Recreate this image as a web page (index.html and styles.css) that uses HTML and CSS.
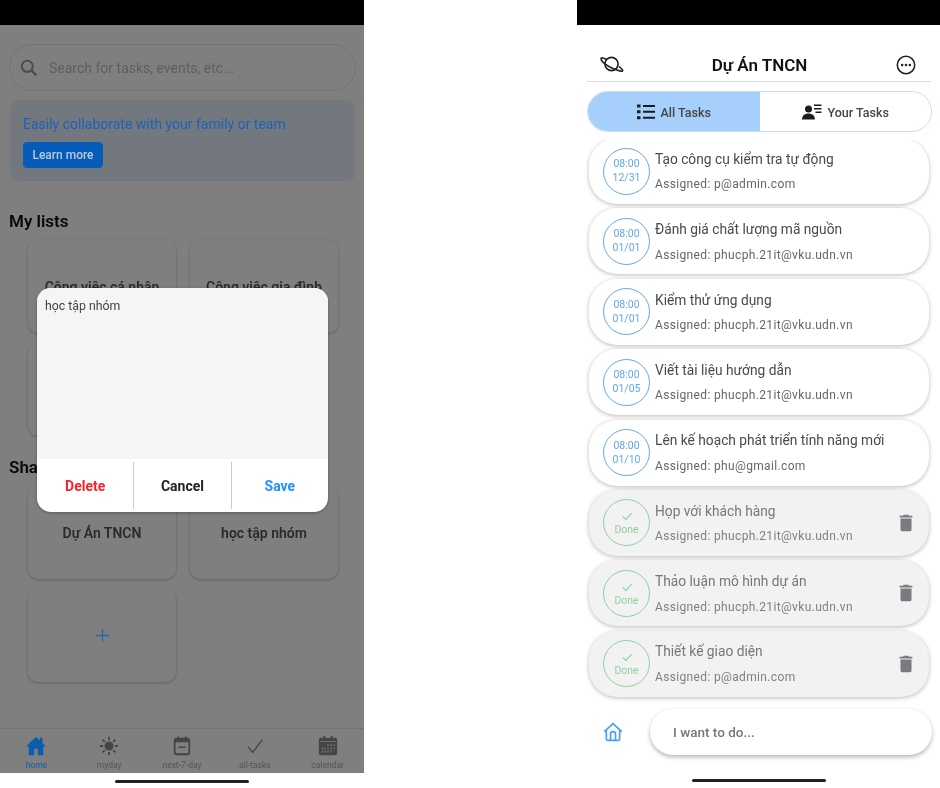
FILE: index.html
```html
<!DOCTYPE html>
<html lang="vi">
<head>
    <meta charset="UTF-8">
    <meta name="viewport" content="width=device-width, initial-scale=1.0">
    <title>Dự Án TNCN</title>
    <link rel="stylesheet" href="styles.css">
</head>
<body>
    <svg class="defs" width="0" height="0">
        <symbol id="i-check" viewBox="0 0 24 24"><path d="M5 13l5 5L20 7" fill="none" stroke="currentColor" stroke-width="2"/></symbol>
        <symbol id="i-trash" viewBox="0 0 24 24"><path fill="currentColor" d="M6 19a2 2 0 0 0 2 2h8a2 2 0 0 0 2-2V7H6v12zM19 4h-3.5l-1-1h-5l-1 1H5v2h14V4z"/></symbol>
    </svg>

    <div class="phone phone-home">
        <div class="status-bar"></div>
        <div class="screen">
            <div class="search">
                <svg class="search-icon" viewBox="0 0 24 24"><circle cx="10.5" cy="10.5" r="7" fill="none" stroke="currentColor" stroke-width="2.6"/><path d="M15.5 15.5L21 21" stroke="currentColor" stroke-width="3" stroke-linecap="round"/></svg>
                <span>Search for tasks, events, etc...</span>
            </div>
            <div class="banner">
                <p>Easily collaborate with your family or team</p>
                <button class="learn-btn">Learn more</button>
            </div>
            <h2 class="section-title my-lists">My lists</h2>
            <div class="list-grid">
                <div class="list-card">Công việc cá nhân</div>
                <div class="list-card">Công việc gia đình</div>
                <div class="list-card"></div>
            </div>
            <h2 class="section-title shared">Shared lists</h2>
            <div class="list-grid">
                <div class="list-card">Dự Án TNCN</div>
                <div class="list-card">học tập nhóm</div>
                <div class="list-card add-card">
                    <svg viewBox="0 0 16 16" width="15" height="15"><path d="M8 1v14M1 8h14" stroke="currentColor" stroke-width="1.4"/></svg>
                </div>
            </div>
        </div>
        <nav class="tabbar">
            <div class="tab active">
                <svg viewBox="0 0 24 24"><path fill="currentColor" d="M12 2L1 12.500h3V22h6v-7h4v7h6v-9.500h3l-4-3.800V3h-3v2.900z"/></svg>
                <span>home</span>
            </div>
            <div class="tab">
                <svg viewBox="0 0 24 24"><circle cx="12" cy="12" r="5" fill="currentColor"/><path d="M12 2v3.500M12 18.500V22M2 12h3.500M18.500 12H22M5 5l2.400 2.400M16.600 16.600L19 19M5 19l2.400-2.400M16.600 7.400L19 5" stroke="currentColor" stroke-width="2"/></svg>
                <span>myday</span>
            </div>
            <div class="tab">
                <svg viewBox="0 0 24 24"><rect x="4" y="4" width="16" height="17" rx="2" fill="none" stroke="currentColor" stroke-width="2"/><path fill="currentColor" d="M4 4h16v4H4zM7 1.500h2V5H7zM15 1.500h2V5h-2zM8 12.500h8v1.800H8z"/></svg>
                <span>next-7-day</span>
            </div>
            <div class="tab">
                <svg viewBox="0 0 24 24"><path d="M4.500 13l5 6L20 5" fill="none" stroke="currentColor" stroke-width="1.500"/></svg>
                <span>all-tasks</span>
            </div>
            <div class="tab">
                <svg viewBox="0 0 24 24"><path fill="currentColor" d="M4 3h3V1h2v2h6V1h2v2h3a2 2 0 0 1 2 2v15a2 2 0 0 1-2 2H4a2 2 0 0 1-2-2V5a2 2 0 0 1 2-2z"/><path fill="#d8d8d8" d="M3 6.500h18v1H3zM11 10h2v2h-2zM14.500 10h2v2h-2zM18 10h1.500v2H18zM5 13.500h2v2H5zM8 13.500h2v2H8zM11 13.500h2v2h-2zM14.500 13.500h2v2h-2zM18 13.500h1.500v2H18zM5 17h2v2H5zM8 17h2v2H8zM11 17h2v2h-2zM14.500 17h2v2h-2z"/></svg>
                <span>calendar</span>
            </div>
        </nav>
        <div class="home-area"><div class="home-indicator"></div></div>

        <div class="backdrop"></div>
        <div class="dialog">
            <div class="dialog-body">học tập nhóm</div>
            <div class="dialog-actions">
                <button class="dlg-btn delete">Delete</button>
                <button class="dlg-btn">Cancel</button>
                <button class="dlg-btn save">Save</button>
            </div>
        </div>
    </div>

    <div class="phone phone-tasks">
        <div class="status-bar"></div>
        <header class="top">
            <svg class="top-icon" viewBox="0 0 24 24"><g fill="none" stroke="currentColor" stroke-width="1.600"><circle cx="11.500" cy="11" r="6.600"/><path d="M6.500 6.500C3.500 5 1 4.300 1 5.500c0 2 3.500 5.500 8 8 4.500 2.500 12 5.500 13.500 4.500 .8-.6-1-2.500-3.500-4.500"/></g></svg>
            <h1>Dự Án TNCN</h1>
            <svg class="top-icon more" viewBox="0 0 24 24"><circle cx="12" cy="12" r="9.500" fill="none" stroke="currentColor" stroke-width="1.700"/><circle cx="7.800" cy="12" r="1.400" fill="currentColor"/><circle cx="12" cy="12" r="1.400" fill="currentColor"/><circle cx="16.200" cy="12" r="1.400" fill="currentColor"/></svg>
        </header>
        <div class="segment">
            <div class="seg-item on">
                <svg viewBox="0 0 18 16" width="18" height="16"><path fill="currentColor" d="M0 0.500h3.500v3H0zM0 6.300h3.500v3H0zM0 12.200h3.500v3H0zM6 1h12v2H6zM6 6.800h12v2H6zM6 12.700h12v2H6z"/></svg>
                <span>All Tasks</span>
            </div>
            <div class="seg-item">
                <svg viewBox="0 0 20 16" width="20" height="16"><circle cx="6.500" cy="5" r="3.500" fill="currentColor"/><path fill="currentColor" d="M0 15.500c0-4 3-6 6.500-6s6.500 2 6.500 6zM12 0.500h7.500v1.500H12zM12 4h7.500v1.500H12zM13.500 7.500h6V9h-6z"/></svg>
                <span>Your Tasks</span>
            </div>
        </div>
        <div class="task-list">
            <div class="task">
                <div class="badge"><span>08:00</span><span>12/31</span></div>
                <div class="task-text"><div class="task-name">Tạo công cụ kiểm tra tự động</div><div class="task-who">Assigned: p@admin.com</div></div>
            </div>
            <div class="task">
                <div class="badge"><span>08:00</span><span>01/01</span></div>
                <div class="task-text"><div class="task-name">Đánh giá chất lượng mã nguồn</div><div class="task-who">Assigned: phucph.21it@vku.udn.vn</div></div>
            </div>
            <div class="task">
                <div class="badge"><span>08:00</span><span>01/01</span></div>
                <div class="task-text"><div class="task-name">Kiểm thử ứng dụng</div><div class="task-who">Assigned: phucph.21it@vku.udn.vn</div></div>
            </div>
            <div class="task">
                <div class="badge"><span>08:00</span><span>01/05</span></div>
                <div class="task-text"><div class="task-name">Viết tài liệu hướng dẫn</div><div class="task-who">Assigned: phucph.21it@vku.udn.vn</div></div>
            </div>
            <div class="task">
                <div class="badge"><span>08:00</span><span>01/10</span></div>
                <div class="task-text"><div class="task-name">Lên kế hoạch phát triển tính năng mới</div><div class="task-who">Assigned: phu@gmail.com</div></div>
            </div>
            <div class="task done">
                <div class="badge"><svg width="14" height="14"><use href="#i-check"/></svg><span>Done</span></div>
                <div class="task-text"><div class="task-name">Họp với khách hàng</div><div class="task-who">Assigned: phucph.21it@vku.udn.vn</div></div>
                <svg class="trash" width="22" height="22"><use href="#i-trash"/></svg>
            </div>
            <div class="task done">
                <div class="badge"><svg width="14" height="14"><use href="#i-check"/></svg><span>Done</span></div>
                <div class="task-text"><div class="task-name">Thảo luận mô hình dự án</div><div class="task-who">Assigned: phucph.21it@vku.udn.vn</div></div>
                <svg class="trash" width="22" height="22"><use href="#i-trash"/></svg>
            </div>
            <div class="task done">
                <div class="badge"><svg width="14" height="14"><use href="#i-check"/></svg><span>Done</span></div>
                <div class="task-text"><div class="task-name">Thiết kế giao diện</div><div class="task-who">Assigned: p@admin.com</div></div>
                <svg class="trash" width="22" height="22"><use href="#i-trash"/></svg>
            </div>
        </div>
        <div class="composer">
            <svg class="composer-home" viewBox="0 0 24 24"><path d="M1.500 11.500L12 2l10.500 9.500M4 10v10.500a1.500 1.500 0 0 0 1.500 1.500h13a1.500 1.500 0 0 0 1.500-1.500V10M9 22v-7.500a3 3 0 0 1 6 0V22" fill="none" stroke="currentColor" stroke-width="2"/></svg>
            <div class="composer-input">I want to do...</div>
        </div>
        <div class="home-area"><div class="home-indicator"></div></div>
    </div>
</body>
</html>
```

FILE: styles.css
```css
* {
    box-sizing: border-box;
}

body {
    margin: 0;
    height: 788px;
    overflow: hidden;
    background: #fff;
    font-family: Roboto, 'Noto Sans', sans-serif;
    color: #333;
    display: flex;
    justify-content: space-between;
}

.defs {
    position: absolute;
}

.phone {
    width: 364px;
    height: 788px;
    display: flex;
    flex-direction: column;
    position: relative;
    overflow: hidden;
    filter: blur(0.45px);
}

.phone-tasks {
    width: 363px;
}

.status-bar {
    height: 25px;
    flex: none;
    background: #000;
}

/* left screen */
.screen {
    flex: 1;
    padding: 19px 8px 0 9px;
    background: #fff;
}

.search {
    height: 47px;
    border: 1px solid #e6e6e6;
    border-radius: 24px;
    display: flex;
    align-items: center;
    padding-left: 9px;
    gap: 11px;
    color: #bcbcbc;
    font-size: 14px;
}

.search-icon {
    width: 19px;
    height: 19px;
    color: #9a9a9a;
}

.banner {
    height: 81px;
    margin: 9px 1px 0;
    padding: 15px 13px 0;
    border-radius: 8px;
    background: #e6f1ff;
}

/* these blues stay bright through the backdrop, so they sit above it */
.banner p,
.learn-btn,
.add-card svg,
.tab.active {
    position: relative;
    z-index: 1;
}

.banner p {
    margin: 0 0 9px;
    font-size: 14px;
    line-height: 18px;
    color: #1c62b8;
}

.learn-btn {
    display: block;
    width: 80px;
    height: 26px;
    border: 0;
    border-radius: 4px;
    padding: 0;
    background: #065cb8;
    color: #b8c8dc;
    font: 500 12px Roboto, sans-serif;
}

.section-title {
    margin: 0;
    font-size: 17px;
    line-height: 20px;
    font-weight: 600;
    color: #111;
}

.my-lists {
    margin-top: 30px;
}

.shared {
    margin-top: 21px;
}

.list-grid {
    display: grid;
    grid-template-columns: 148px 148px;
    gap: 10px 14px;
    margin: 9px 0 0 19px;
}

.list-card {
    height: 93px;
    border-radius: 10px;
    background: #fff;
    box-shadow: 0 1px 3px rgba(0, 0, 0, .25);
    display: flex;
    align-items: center;
    justify-content: center;
    text-align: center;
    font-size: 14px;
    font-weight: 600;
    color: #555;
}

.add-card {
    color: #2a66ac;
}

.tabbar {
    height: 45px;
    flex: none;
    display: flex;
    border-top: 1px solid #e8e8e8;
    background: #fff;
}

.tab {
    flex: 1;
    display: flex;
    flex-direction: column;
    align-items: center;
    gap: 3px;
    padding-top: 6px;
    font-size: 8.500px;
    color: #a8a8a8;
}

.tab svg {
    width: 22px;
    height: 22px;
    color: #8a8a8a;
}

.tab.active,
.tab.active svg {
    color: #0a5cac;
}

.home-area {
    height: 15px;
    flex: none;
    background: #fff;
    display: flex;
    align-items: center;
    justify-content: center;
}

.home-indicator {
    width: 134px;
    height: 3px;
    margin-top: 1px;
    border-radius: 2px;
    background: #222;
}

.backdrop {
    position: absolute;
    left: 0;
    right: 0;
    top: 25px;
    height: 748px;
    background: rgba(0, 0, 0, .5);
}

.dialog {
    position: absolute;
    z-index: 2;
    left: 37px;
    top: 288px;
    width: 291px;
    height: 224px;
    border-radius: 14px;
    overflow: hidden;
    background: #fff;
    display: flex;
    flex-direction: column;
    box-shadow: 0 1px 3px rgba(0, 0, 0, .3);
}

.dialog-body {
    flex: 1;
    background: #f5f5f5;
    padding: 11px 8px;
    font-size: 12.300px;
    line-height: 15px;
    color: #444;
}

.dialog-actions {
    height: 53px;
    display: flex;
    padding: 3px 0;
}

.dlg-btn {
    flex: 1;
    border: 0;
    background: none;
    padding: 0;
    font: 700 14px Roboto, sans-serif;
    color: #222;
    border-left: 1.500px solid #ccc;
}

.dlg-btn.delete {
    color: #f5222d;
    border-left: 0;
}

.dlg-btn.save {
    color: #1e90ff;
}

/* right screen */
.top {
    height: 57px;
    flex: none;
    margin: 0 9px 0 10px;
    padding: 23px 14px 0 13px;
    display: flex;
    align-items: center;
    justify-content: space-between;
    border-bottom: 1px solid #ddd;
}

.top h1 {
    margin: 0;
    font-size: 17px;
    font-weight: 600;
    color: #111;
}

.top-icon {
    width: 24px;
    height: 24px;
    color: #222;
}

.top-icon.more {
    width: 22px;
    height: 22px;
}

.segment {
    height: 41px;
    flex: none;
    margin: 9px 8px 0 10px;
    border-radius: 21px;
    border: 1px solid #c5def8;
    overflow: hidden;
    display: flex;
}

.seg-item {
    flex: 1;
    display: flex;
    align-items: center;
    justify-content: center;
    gap: 6px;
    padding-top: 1px;
    font-size: 12.500px;
    font-weight: 500;
    color: #444;
}

.seg-item svg {
    color: #1c1c1c;
}

.seg-item.on {
    background: #a6d0fb;
}

.task-list {
    height: 563px;
    flex: none;
    margin-top: 8px;
    padding: 0 11px 0 12px;
    overflow: hidden;
    display: flex;
    flex-direction: column;
    gap: 4.400px;
}

.task {
    height: 66px;
    flex: none;
    padding: 0 14px;
    border-radius: 28px;
    background: #fff;
    box-shadow: 0 1px 4px rgba(0, 0, 0, .28);
    display: flex;
    align-items: center;
    gap: 5px;
}

.task:first-child {
    margin-top: -2px;
}

.badge {
    width: 47px;
    height: 47px;
    flex: none;
    border: 1.800px solid #62a8e8;
    border-radius: 50%;
    display: flex;
    flex-direction: column;
    align-items: center;
    justify-content: center;
    gap: 2px;
    font-size: 10.500px;
    line-height: 12px;
    color: #62a8e8;
}

.task-text {
    flex: 1;
    display: flex;
    flex-direction: column;
    gap: 9.500px;
}

.task-name {
    font-size: 13.750px;
    line-height: 17px;
    color: #4a4a4a;
}

.task-who {
    font-size: 12px;
    line-height: 14px;
    letter-spacing: .35px;
    color: #666;
}

.task.done {
    background: #f2f2f2;
}

.done .badge {
    border-color: #8fd19e;
    color: #8fd19e;
    gap: 1px;
}

.done .task-name {
    color: #777;
}

.done .task-who {
    color: #808080;
}

.trash {
    color: #7a7a80;
    margin-right: -2px;
}

.composer {
    height: 46px;
    flex: none;
    margin-top: 6px;
    padding-right: 8px;
    display: flex;
    align-items: center;
}

.composer-home {
    width: 20px;
    height: 20px;
    margin: 0 27px 0 26px;
    color: #4a9ff5;
}

.composer-input {
    flex: 1;
    height: 46px;
    border-radius: 23px;
    background: #fff;
    box-shadow: 0 2px 4px rgba(0, 0, 0, .3);
    display: flex;
    align-items: center;
    padding-left: 23px;
    font-size: 13.500px;
    font-weight: 500;
    color: #777;
}

.phone-tasks .home-area {
    flex: 1;
    background: none;
    align-items: flex-end;
    padding-bottom: 6px;
}
```
